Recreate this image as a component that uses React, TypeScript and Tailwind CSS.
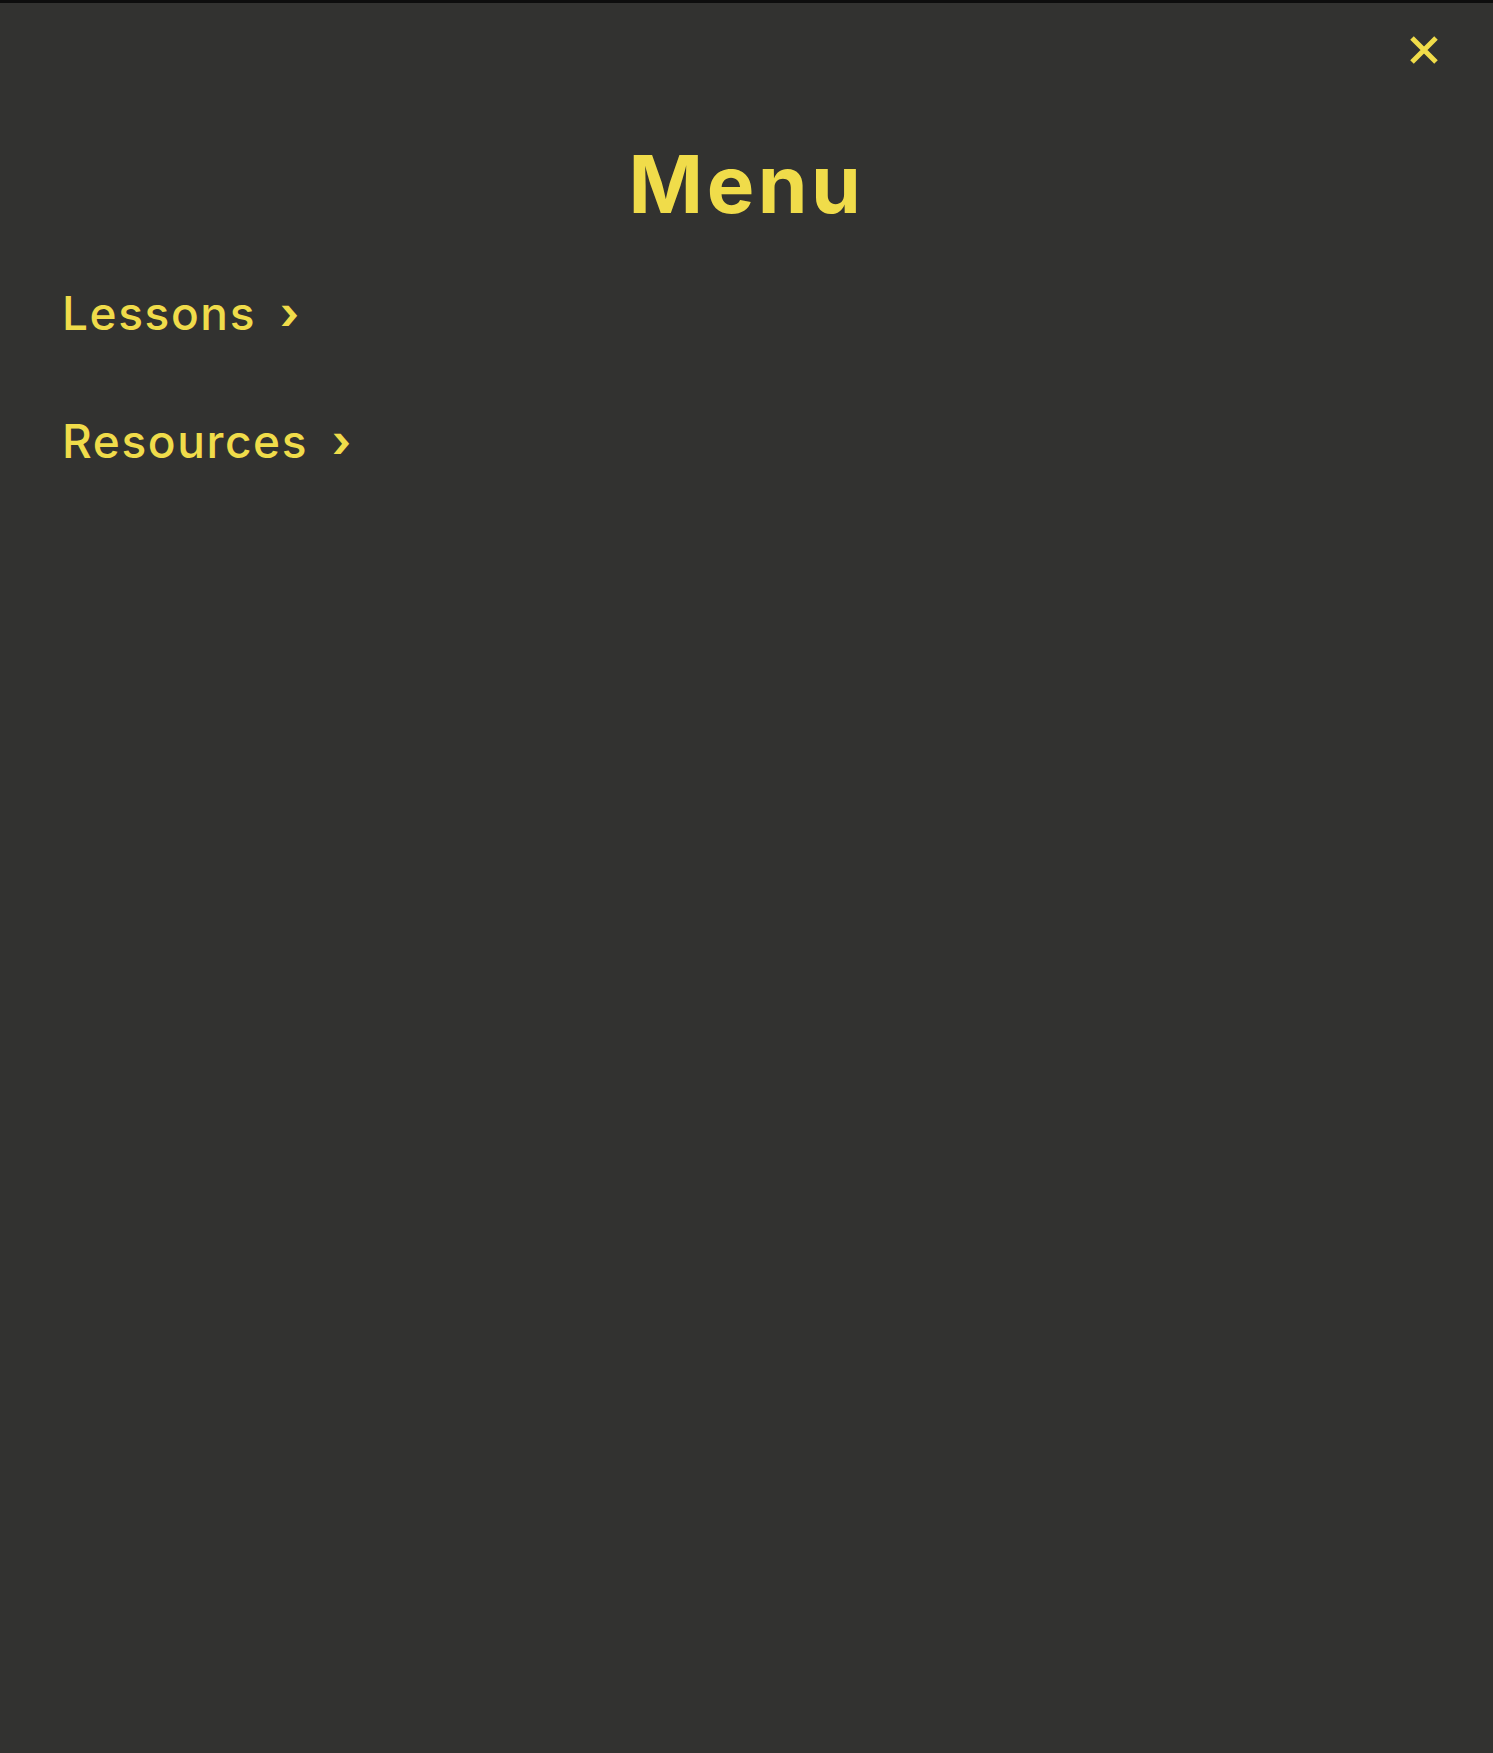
import React from "react";

const items = ["Lessons", "Resources"];

export default function App() {
  const [open, setOpen] = React.useState(true);

  return (
    <div className="min-h-[1753px] w-full bg-[#323230] border-t-[3px] border-[#0d0d0d] text-[#f0dc4a] font-['Inter','Liberation_Sans',sans-serif] relative">
      <button
        className="absolute top-[30px] right-[52px] w-[34px] h-[34px] flex items-center justify-center cursor-pointer"
        onClick={() => setOpen(!open)}
        aria-label="close menu"
      >
        <svg width="32" height="32" viewBox="0 0 32 32">
          <path d="M4 4 L28 28 M28 4 L4 28" stroke="#f0dc4a" strokeWidth="5" strokeLinecap="butt" />
        </svg>
      </button>

      <h1 className="pt-[141px] text-center text-[80px] leading-none font-bold tracking-[3.5px]">Menu</h1>

      <nav className="mt-[66px] pl-[62px] flex flex-col gap-[82px]">
        {items.map((item) => (
          <a key={item} href="#" className="flex items-center gap-[24px] text-[46px] leading-none font-medium tracking-[1.6px]">
            <span>{item}</span>
            <span className="text-[44px] font-bold">›</span>
          </a>
        ))}
      </nav>
    </div>
  );
}
